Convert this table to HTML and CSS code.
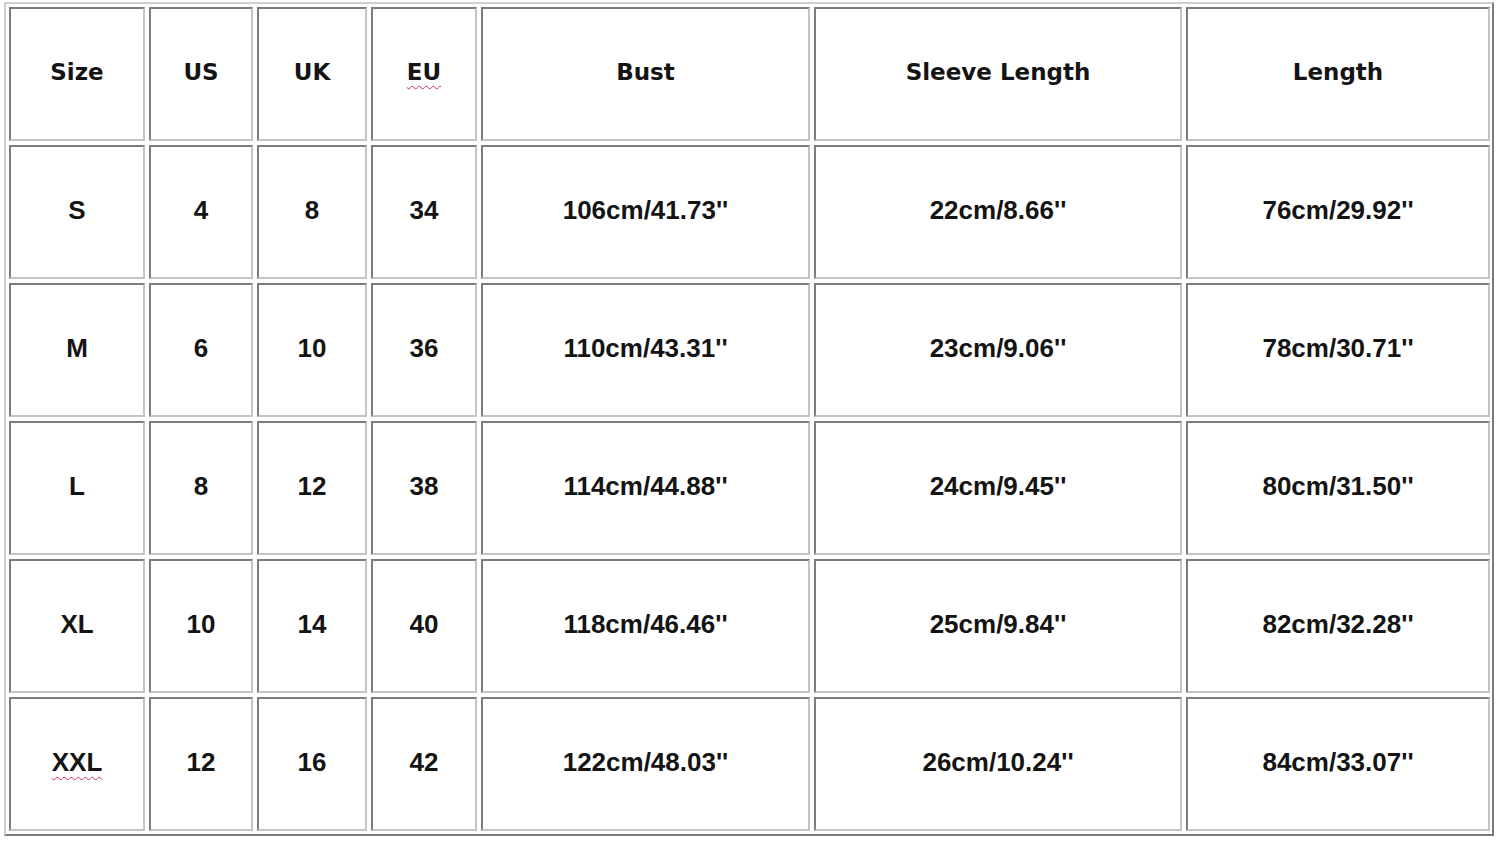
FILE: index.html
```html
<!DOCTYPE html>
<html>
<head>
<meta charset="utf-8">
<link rel="stylesheet" href="styles.css">
</head>
<body>
<div class="table">
  <div class="cell head">Size</div>
  <div class="cell head">US</div>
  <div class="cell head">UK</div>
  <div class="cell head"><span class="spell">EU</span></div>
  <div class="cell head">Bust</div>
  <div class="cell head">Sleeve Length</div>
  <div class="cell head">Length</div>

  <div class="cell">S</div>
  <div class="cell">4</div>
  <div class="cell">8</div>
  <div class="cell">34</div>
  <div class="cell">106cm/41.73''</div>
  <div class="cell">22cm/8.66''</div>
  <div class="cell">76cm/29.92''</div>

  <div class="cell">M</div>
  <div class="cell">6</div>
  <div class="cell">10</div>
  <div class="cell">36</div>
  <div class="cell">110cm/43.31''</div>
  <div class="cell">23cm/9.06''</div>
  <div class="cell">78cm/30.71''</div>

  <div class="cell">L</div>
  <div class="cell">8</div>
  <div class="cell">12</div>
  <div class="cell">38</div>
  <div class="cell">114cm/44.88''</div>
  <div class="cell">24cm/9.45''</div>
  <div class="cell">80cm/31.50''</div>

  <div class="cell">XL</div>
  <div class="cell">10</div>
  <div class="cell">14</div>
  <div class="cell">40</div>
  <div class="cell">118cm/46.46''</div>
  <div class="cell">25cm/9.84''</div>
  <div class="cell">82cm/32.28''</div>

  <div class="cell"><span class="spell">XXL</span></div>
  <div class="cell">12</div>
  <div class="cell">16</div>
  <div class="cell">42</div>
  <div class="cell">122cm/48.03''</div>
  <div class="cell">26cm/10.24''</div>
  <div class="cell">84cm/33.07''</div>
</div>
</body>
</html>
```

FILE: styles.css
```css
html, body {
  margin: 0;
  padding: 0;
  background: #ffffff;
}

body {
  width: 1500px;
  height: 845px;
  overflow: hidden;
}

.table {
  display: inline-grid;
  grid-template-columns: 136px 104px 110px 106px 329px 368px 304px;
  grid-auto-rows: 134px;
  gap: 4px;
  margin: 2px 0 0 4px;
  padding: 3px 2px 3px 3px;
  border-style: solid;
  border-width: 2px;
  border-color: #cfcfcf #7a7a7a #7a7a7a #cfcfcf;
  background: #ffffff;
}

.cell {
  box-sizing: border-box;
  display: flex;
  align-items: center;
  justify-content: center;
  padding-bottom: 4px;
  border-style: solid;
  border-width: 2px;
  border-color: #7c7c7c #c4c4c4 #c4c4c4 #7c7c7c;
  font-family: "Liberation Sans", Arial, sans-serif;
  font-weight: bold;
  font-size: 26px;
  color: #141414;
  white-space: nowrap;
}

.cell.head {
  font-family: "DejaVu Sans", Verdana, sans-serif;
  font-size: 23px;
  padding-bottom: 4px;
}

.spell {
  text-decoration: underline wavy #c8305a;
  text-decoration-thickness: 1px;
  text-underline-offset: 5px;
}
```
